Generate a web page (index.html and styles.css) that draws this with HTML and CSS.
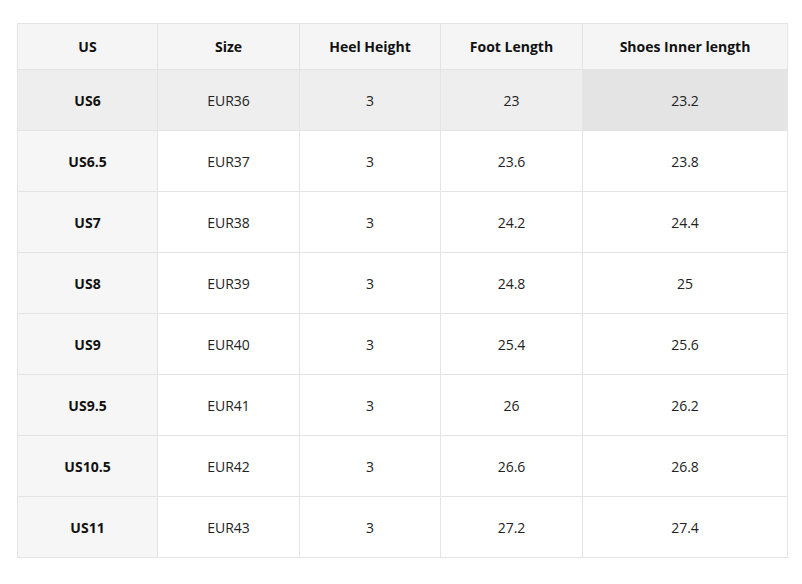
FILE: index.html
```html
<!DOCTYPE html>
<html>
<head>
<meta charset="utf-8">
<link rel="stylesheet" href="styles.css">
</head>
<body>
<div class="wrap">
<table class="size-table">
  <colgroup>
    <col class="c1"><col class="c2"><col class="c3"><col class="c4"><col class="c5">
  </colgroup>
  <thead>
    <tr><th>US</th><th>Size</th><th>Heel Height</th><th>Foot Length</th><th>Shoes Inner length</th></tr>
  </thead>
  <tbody>
    <tr class="hover"><td class="us">US6</td><td>EUR36</td><td>3</td><td>23</td><td class="active">23.2</td></tr>
    <tr><td class="us">US6.5</td><td>EUR37</td><td>3</td><td>23.6</td><td>23.8</td></tr>
    <tr><td class="us">US7</td><td>EUR38</td><td>3</td><td>24.2</td><td>24.4</td></tr>
    <tr><td class="us">US8</td><td>EUR39</td><td>3</td><td>24.8</td><td>25</td></tr>
    <tr><td class="us">US9</td><td>EUR40</td><td>3</td><td>25.4</td><td>25.6</td></tr>
    <tr><td class="us">US9.5</td><td>EUR41</td><td>3</td><td>26</td><td>26.2</td></tr>
    <tr><td class="us">US10.5</td><td>EUR42</td><td>3</td><td>26.6</td><td>26.8</td></tr>
    <tr><td class="us">US11</td><td>EUR43</td><td>3</td><td>27.2</td><td>27.4</td></tr>
  </tbody>
</table>
</div>
</body>
</html>
```

FILE: styles.css
```css
html, body {
  margin: 0;
  padding: 0;
  background: #ffffff;
}
.wrap {
  padding: 23px 0 0 17px;
}
.size-table {
  border-collapse: collapse;
  table-layout: fixed;
  width: 770px;
  font-family: "Open Sans", "Noto Sans", sans-serif;
  font-size: 14px;
  color: #222222;
}
.c1 { width: 140px; }
.c2 { width: 142px; }
.c3 { width: 141px; }
.c4 { width: 142px; }
.c5 { width: 205px; }
.size-table th,
.size-table td {
  border: 1px solid #e4e4e4;
  text-align: center;
  vertical-align: middle;
  padding: 0;
}
.size-table th {
  height: 45px;
  background: #f5f5f5;
  font-weight: 700;
  color: #111111;
}
.size-table td {
  height: 60px;
}
.size-table td.us {
  background: #f6f6f6;
  font-weight: 700;
  color: #111111;
}
.size-table tr.hover td {
  background: #eeeeee;
}
.size-table tr.hover td.active {
  background: #e4e4e4;
}
```
